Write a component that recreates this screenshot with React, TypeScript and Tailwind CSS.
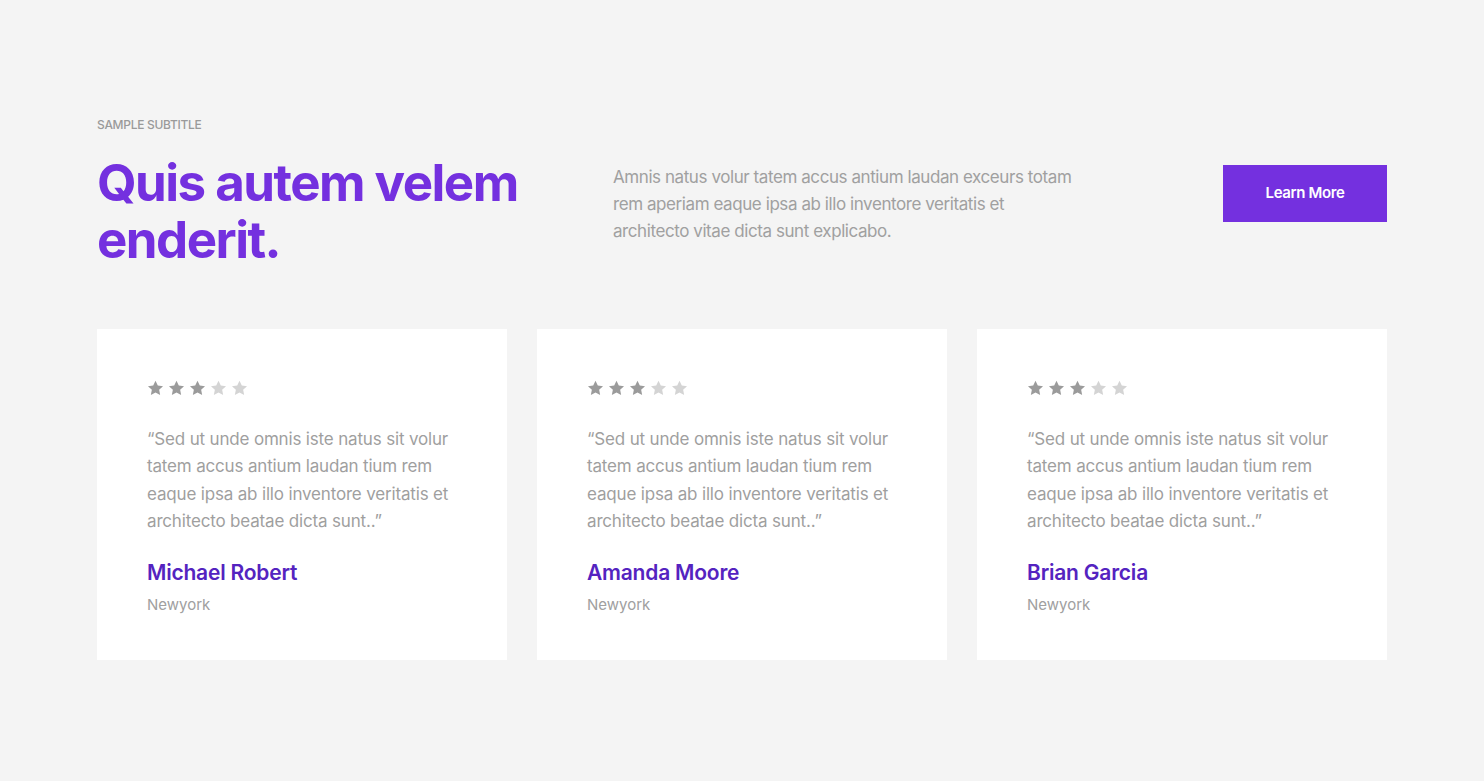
const REVIEWS = [
  { name: "Michael Robert", city: "Newyork", rating: 3 },
  { name: "Amanda Moore", city: "Newyork", rating: 3 },
  { name: "Brian Garcia", city: "Newyork", rating: 3 },
];

function Star({ on }: { on: boolean }) {
  return (
    <svg viewBox="0 0 24 24" className={`w-[19px] h-[19px] ${on ? "text-[#9b9b9b]" : "text-[#d4d4d4]"}`} fill="currentColor">
      <path d="M12 2.2l2.9 6.1 6.6.8-4.9 4.6 1.3 6.6L12 17l-5.9 3.3 1.3-6.6-4.9-4.6 6.6-.8z" />
    </svg>
  );
}

export default function App() {
  return (
    <div className="min-h-screen bg-[#f4f4f4] font-['Inter',sans-serif]">
      <div className="w-[1290px] mx-auto pt-[116px]">
        <p className="text-[12px] uppercase text-[#9a9a9a] font-medium tracking-tight">Sample Subtitle</p>

        {/* Header */}
        <div className="flex items-start mt-[20px]">
          <h2 className="w-[516px] text-[51px] leading-[57px] font-bold text-[#7430df] tracking-[-0.03em]">
            Quis autem velem enderit.
          </h2>
          <p className="w-[464px] text-[17px] leading-[27px] text-[#a0a0a0] tracking-tight mt-[10px]">
            Amnis natus volur tatem accus antium laudan exceurs totam rem aperiam eaque ipsa ab illo inventore veritatis et architecto vitae dicta sunt explicabo.
          </p>
          <button className="ml-auto mt-[11px] w-[164px] h-[57px] bg-[#7430df] text-white text-[15px] font-semibold tracking-tight">
            Learn More
          </button>
        </div>

        {/* Cards */}
        <div className="grid grid-cols-3 gap-[30px] mt-[61px]">
          {REVIEWS.map(r => (
            <div key={r.name} className="bg-white h-[331px] pl-[50px] pr-[50px] pt-[50px]">
              <div className="flex gap-[2px] -ml-[1px]">
                {[0, 1, 2, 3, 4].map(i => <Star key={i} on={i < r.rating} />)}
              </div>
              <p className="mt-[28px] text-[17px] leading-[27.4px] text-[#9f9f9f] tracking-[-0.01em]">
                “Sed ut unde omnis iste natus sit volur tatem accus antium laudan tium rem eaque ipsa ab illo inventore veritatis et architecto beatae dicta sunt..”
              </p>
              <h3 className="mt-[23px] text-[21px] leading-[28px] font-semibold text-[#5423c0] tracking-[-0.01em]">{r.name}</h3>
              <p className="mt-[7px] text-[15px] leading-[22px] text-[#a0a0a0]">{r.city}</p>
            </div>
          ))}
        </div>
      </div>
    </div>
  );
}
